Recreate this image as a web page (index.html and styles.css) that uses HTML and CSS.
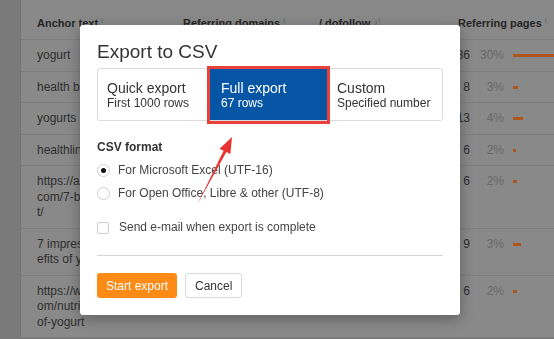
FILE: index.html
```html
<!DOCTYPE html>
<html lang="en">
<head>
  <meta charset="UTF-8" />
  <meta name="viewport" content="width=device-width, initial-scale=1" />
  <title>Anchors – Export to CSV</title>
  <link rel="stylesheet" href="styles.css">
</head>
<body>

  <!-- Table behind the dialog (already dimmed) -->
  <div class="page">
    <div class="side"></div>
    <div class="anchors">
      <div class="row head">
        <div>Anchor text <sup>i</sup></div>
        <div>Referring domains <sup>i</sup></div>
        <div>/ dofollow <span class="sort">↓</span><sup>i</sup></div>
        <div class="pages-head">Referring pages <sup>i</sup></div>
      </div>

      <div class="row">
        <div class="anchor">yogurt</div>
        <div></div>
        <div></div>
        <div class="pages"><span class="num">36</span><span class="pct">30%</span><span class="bar" style="width:60px"></span></div>
      </div>
      <div class="row">
        <div class="anchor">health bene</div>
        <div></div>
        <div></div>
        <div class="pages"><span class="num">8</span><span class="pct">3%</span><span class="bar" style="width:5px"></span></div>
      </div>
      <div class="row">
        <div class="anchor">yogurts</div>
        <div></div>
        <div></div>
        <div class="pages"><span class="num">13</span><span class="pct">4%</span><span class="bar" style="width:10px"></span></div>
      </div>
      <div class="row">
        <div class="anchor">healthline</div>
        <div></div>
        <div></div>
        <div class="pages"><span class="num">6</span><span class="pct">2%</span><span class="bar" style="width:3px"></span></div>
      </div>
      <div class="row">
        <div class="anchor">https://auth<br>com/7-ben<br>t/</div>
        <div></div>
        <div></div>
        <div class="pages"><span class="num">6</span><span class="pct">2%</span><span class="bar" style="width:4px"></span></div>
      </div>
      <div class="row">
        <div class="anchor">7 impressive<br>efits of yog</div>
        <div></div>
        <div></div>
        <div class="pages"><span class="num">9</span><span class="pct">3%</span><span class="bar" style="width:8px"></span></div>
      </div>
      <div class="row">
        <div class="anchor">https://www<br>om/nutrition<br>of-yogurt</div>
        <div></div>
        <div></div>
        <div class="pages"><span class="num">6</span><span class="pct">2%</span><span class="bar" style="width:4px"></span></div>
      </div>
    </div>
  </div>

  <!-- Export dialog -->
  <div class="backdrop">
    <div class="modal">
      <h2>Export to CSV</h2>

      <div class="segments">
        <div class="segment quick">
          <div class="seg-title">Quick export</div>
          <div class="seg-sub">First 1000 rows</div>
        </div>
        <div class="segment full active">
          <div class="seg-title">Full export</div>
          <div class="seg-sub">67 rows</div>
        </div>
        <div class="segment custom">
          <div class="seg-title">Custom</div>
          <div class="seg-sub">Specified number</div>
        </div>
      </div>

      <div class="label">CSV format</div>
      <div class="option first"><span class="radio checked"></span>For Microsoft Excel (UTF-16)</div>
      <div class="option"><span class="radio"></span>For Open Office, Libre &amp; other (UTF-8)</div>
      <div class="option mail"><span class="check"></span>Send e-mail when export is complete</div>

      <div class="actions">
        <button type="button" class="btn start">Start export</button>
        <button type="button" class="btn cancel">Cancel</button>
      </div>
    </div>
  </div>

  <!-- Red annotation arrow -->
  <svg class="arrow" width="554" height="339" viewBox="0 0 554 339">
    <polygon points="197,205 223.6,150.7 219.6,148.8 232,137 230.4,154 226.4,152.1" fill="#e8332f"/>
  </svg>

</body>
</html>
```

FILE: styles.css
```css
body {
  margin: 0;
  font-family: "Liberation Sans", Arial, sans-serif;
  height: 339px;
  overflow: hidden;
  background: #7a7a7a;
}

.page {
  display: flex;
  align-items: flex-start;
  min-height: 100vh;
}

.side {
  width: 20px;
  flex-shrink: 0;
}

/* Dimmed table */
.anchors {
  flex: 1;
  background: #898989;
  border-left: 1px solid #747474;
}

.row {
  display: grid;
  grid-template-columns: 146px 136px 120px 1fr;
  padding: 8px 0 7px 16px;
  border-bottom: 1px solid #7e7e7e;
  font-size: 12px;
  line-height: 15.5px;
  color: #2e2e2e;
}

.row.head {
  padding: 13px 0 8px 16px;
  font-size: 11px;
  line-height: 15px;
  font-weight: bold;
  color: #262626;
}

.row sup {
  font-size: 8px;
  font-weight: normal;
  color: #666;
  vertical-align: 4px;
}

.sort {
  font-size: 10px;
}

.pages-head {
  padding-left: 19px;
}

.anchor {
  white-space: nowrap;
  overflow: hidden;
}

.pages {
  display: flex;
  align-items: flex-start;
}

.num {
  width: 31px;
  text-align: right;
}

.pct {
  width: 34px;
  text-align: right;
  color: #686868;
}

.bar {
  height: 3px;
  margin: 6px 0 0 9px;
  background: #b0561d;
}

/* Dialog */
.backdrop {
  position: fixed;
  top: 0;
  left: 0;
  right: 0;
  bottom: 0;
  display: flex;
  align-items: flex-start;
  padding: 25px 0 0 80px;
}

.modal {
  width: 346px;
  padding: 16px 17px 17px;
  background: #fff;
  border-radius: 3px;
  box-shadow: 0 4px 14px rgba(0,0,0,0.3);
  color: #333;
}

.modal h2 {
  margin: 0;
  font-size: 19px;
  line-height: 22px;
  font-weight: normal;
  color: #333;
}

.segments {
  display: flex;
  margin-top: 5px;
  border: 1px solid #dcdcdc;
  border-radius: 3px;
}

.segment {
  padding: 11px 10px 9px;
  box-sizing: border-box;
  color: #333;
}

.quick { width: 110px; padding-left: 9px; }
.full { width: 122px; padding-left: 13px; }
.custom { width: 112px; padding-left: 7px; }

.segment.active {
  position: relative;
  background: #0756a6;
  color: #fff;
}

/* red highlight drawn round the chosen option */
.segment.active::after {
  content: "";
  position: absolute;
  top: -3px;
  left: -1px;
  right: 0;
  bottom: -4px;
  border: 3px solid #e8403b;
}

.seg-title {
  font-size: 14px;
  line-height: 16px;
}

.seg-sub {
  font-size: 12px;
  line-height: 15px;
}

.label {
  margin-top: 19px;
  font-size: 12px;
  line-height: 15px;
  font-weight: bold;
  color: #333;
}

.option {
  display: flex;
  align-items: center;
  gap: 8px;
  margin-top: 8px;
  font-size: 12px;
  line-height: 15px;
  color: #444;
}

.option.mail {
  margin-top: 19px;
  gap: 10px;
}

.radio {
  width: 13px;
  height: 13px;
  box-sizing: border-box;
  border: 1px solid #cfcfcf;
  border-radius: 50%;
  display: flex;
  align-items: center;
  justify-content: center;
}

.radio.checked::before {
  content: "";
  width: 5px;
  height: 5px;
  border-radius: 50%;
  background: #111;
}

.check {
  width: 12px;
  height: 12px;
  box-sizing: border-box;
  border: 1px solid #cfcfcf;
  border-radius: 2px;
}

.actions {
  display: flex;
  gap: 8px;
  margin-top: 20px;
  padding-top: 17px;
  border-top: 1px solid #d4d4d4;
}

.btn {
  height: 25px;
  padding: 0 9px;
  font-family: inherit;
  font-size: 12px;
  border-radius: 3px;
  cursor: pointer;
}

.btn.start {
  background: #ff8b17;
  color: #fff;
  border: none;
}

.btn.cancel {
  background: #fff;
  color: #333;
  border: 1px solid #d9d9d9;
}

.arrow {
  position: absolute;
  top: 0;
  left: 0;
  pointer-events: none;
}
```
